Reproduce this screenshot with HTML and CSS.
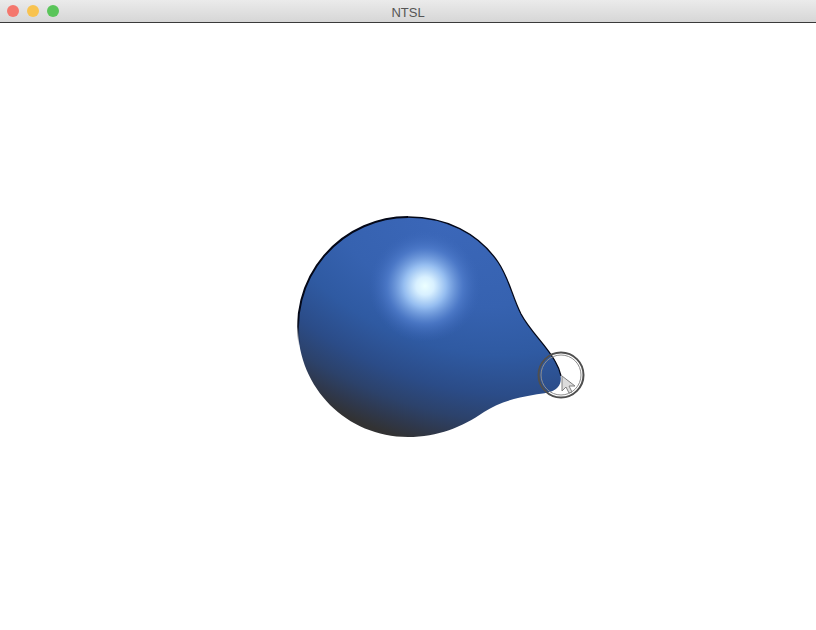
FILE: index.html
```html
<!DOCTYPE html>
<html lang="en">
<head>
<meta charset="utf-8">
<title>NTSL</title>
<link rel="stylesheet" href="styles.css">
</head>
<body>
<div class="window">
  <header class="titlebar">
    <div class="lights">
      <span class="light light-close"></span>
      <span class="light light-min"></span>
      <span class="light light-max"></span>
    </div>
    <div class="title">NTSL</div>
  </header>
  <main class="canvas">
    <svg class="scene" width="816" height="607" viewBox="0 23 816 607" aria-label="Shaded blue blob with cursor">
      <defs>
        <radialGradient id="body" gradientUnits="userSpaceOnUse" cx="0" cy="0" r="1" gradientTransform="translate(445 225) rotate(22) scale(340 215)">
          <stop offset="0" stop-color="#3b67b9"/>
          <stop offset="0.35" stop-color="#3662b0"/>
          <stop offset="0.55" stop-color="#2f5aa2"/>
          <stop offset="0.72" stop-color="#2b4c88"/>
          <stop offset="0.84" stop-color="#2c426b"/>
          <stop offset="0.93" stop-color="#2f384c"/>
          <stop offset="1" stop-color="#323233"/>
        </radialGradient>
        <radialGradient id="shine" gradientUnits="userSpaceOnUse" cx="425" cy="286" r="56">
          <stop offset="0" stop-color="#ecffff"/>
          <stop offset="0.16" stop-color="#d8f0ff"/>
          <stop offset="0.38" stop-color="#95bdf0"/>
          <stop offset="0.68" stop-color="#5380cf" stop-opacity="0.7"/>
          <stop offset="1" stop-color="#3a66b8" stop-opacity="0"/>
        </radialGradient>
        <linearGradient id="edgefade" gradientUnits="userSpaceOnUse" x1="0" y1="320" x2="0" y2="346">
          <stop offset="0" stop-color="#040818"/>
          <stop offset="1" stop-color="#040818" stop-opacity="0"/>
        </linearGradient>
      </defs>
      <path class="blob" fill="url(#body)" d="M408 217 C446 217 478 233 498 262 C509 278 512 296 521 314 C530 331 546 345 555 361 C561 371 563 381 558 387 C553 393 544 393 533 395 C514 398 498 403 484 412 C462 427 438 437 408 437 C347 437 298 388 298 327 C298 266 347 217 408 217 Z"/>
      <circle cx="425" cy="286" r="56" fill="url(#shine)"/>
      <path class="edge-left" d="M299.5 345 A110 110 0 0 1 408 217"/>
      <path class="edge" d="M408 217 C446 217 478 233 498 262 C509 278 512 296 521 314 C530 331 546 345 555 361 C558 366 560 371 561 376"/>
      <circle class="ring-outer" cx="561" cy="375" r="22.5"/>
      <circle class="ring-inner" cx="561" cy="375" r="20"/>
      <path class="cursor" d="M562 376 L562 391 L566 387 L569 393 L572 392 L569 386 L575 386 Z"/>
    </svg>
  </main>
</div>
</body>
</html>
```

FILE: styles.css
```css
html, body {
  margin: 0;
  padding: 0;
  background: #fff;
}

.window {
  width: 816px;
  height: 630px;
  display: flex;
  flex-direction: column;
  overflow: hidden;
}

.titlebar {
  position: relative;
  flex: 0 0 23px;
  box-sizing: border-box;
  display: flex;
  align-items: center;
  justify-content: center;
  background: linear-gradient(#ebebeb, #d6d6d6);
  border-bottom: 1px solid #3a3a3a;
}

.lights {
  position: absolute;
  left: 7px;
  top: 5px;
  display: flex;
  gap: 8px;
}

.light {
  width: 12px;
  height: 12px;
  border-radius: 50%;
}

.light-close { background: #f4776d; }
.light-min { background: #f8c34f; }
.light-max { background: #5ac55a; }

.title {
  font-family: "Liberation Sans", Arial, sans-serif;
  font-size: 13px;
  line-height: 16px;
  margin-top: 3px;
  color: #555;
}

.canvas {
  flex: 1;
  background: #fff;
}

.scene {
  display: block;
}

.edge {
  fill: none;
  stroke: #040818;
  stroke-width: 1.3;
}

.edge-left {
  fill: none;
  stroke: url(#edgefade);
  stroke-width: 2;
}

.ring-outer, .ring-inner {
  fill: none;
}

.ring-outer {
  stroke: #4f4f4f;
  stroke-width: 2;
}

.ring-inner {
  stroke: #8f8f8f;
  stroke-width: 1;
}

.cursor {
  fill: #dcdcdc;
  stroke: #808080;
  stroke-width: 1;
}
```
